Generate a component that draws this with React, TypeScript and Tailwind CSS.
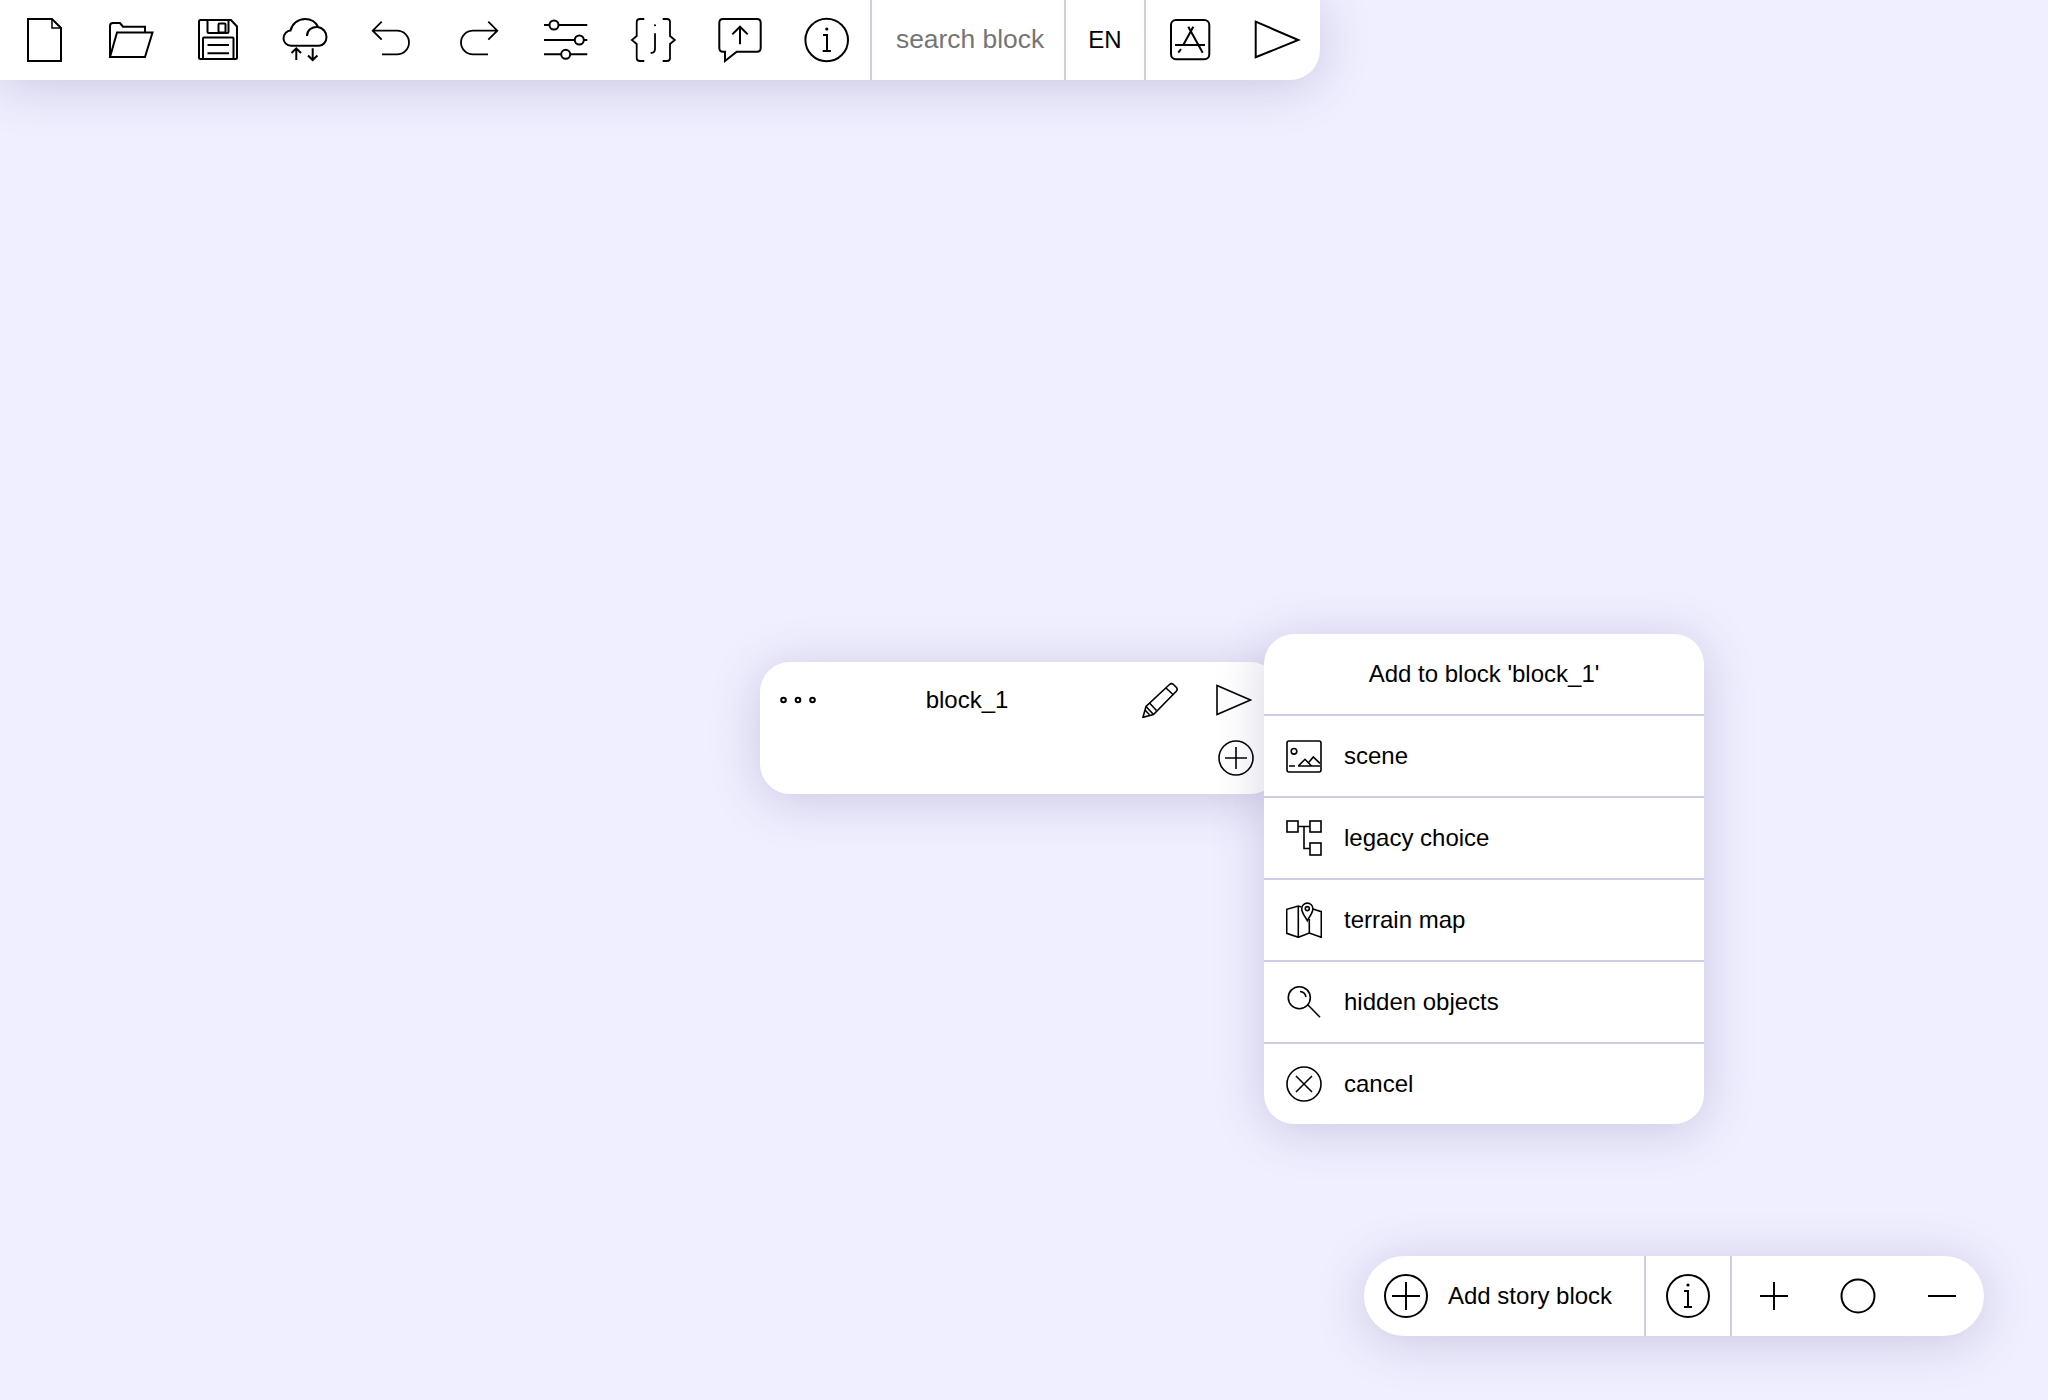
import React from 'react';

const panelShadow = 'shadow-[0_6px_50px_rgba(65,58,125,0.22)]';

const Icon: React.FC<{ size?: number; sw?: number; children: React.ReactNode }> = ({ size = 48, sw = 2, children }) => (
  <svg
    width={size}
    height={size}
    viewBox={`0 0 ${size} ${size}`}
    fill="none"
    stroke="#000"
    strokeWidth={sw}
    className="block shrink-0"
  >
    {children}
  </svg>
);

const toolbarIcons: React.ReactNode[] = [
  // new file
  <Icon key="file">
    <path d="M8 3H32L41 12V45H8Z" />
    <path d="M32 3V12H41" strokeWidth={1.5} />
  </Icon>,
  // open folder
  <Icon key="folder">
    <path d="M3 41V10Q3 7 6 7H13L16 10.7H38V16.5" />
    <path d="M3 41L10 16.5H45.5L38 41Z" />
  </Icon>,
  // save
  <Icon key="save">
    <path d="M6.5 4H37L43 10.5V41.5Q43 43 41.5 43H6.5Q5 43 5 41.5V5.5Q5 4 6.5 4Z" />
    <path d="M13.5 4V15.5Q13.5 17 15 17H33Q34.5 17 34.5 15.5V4" />
    <rect x="24.5" y="7.5" width="7" height="9" rx="1" />
    <path d="M9 43V22.5Q9 21.5 10 21.5H38.5Q39.5 21.5 39.5 22.5V43" />
    <path d="M13.5 29H35M13.5 37.3H35" />
  </Icon>,
  // cloud sync
  <Icon key="cloud">
    <path d="M10 29.7C5.5 29.7 2.5 26 2.5 22.5C2.5 18 6 14.5 9.5 14.5C11 8 17 3 24 3C31 3 35 6.5 37 11C42 12 45.5 16 45.5 21C45.5 26 42 29.7 38 29.7Z" />
    <path d="M26 20C26 14 31 10.5 37 11" />
    <path d="M15.3 44V32.5M10.5 37L15.3 32.3L20 37" />
    <path d="M31.7 32.3V44M27 39.5L31.7 44L36.4 39.5" />
  </Icon>,
  // undo
  <Icon key="undo" sw={1.8}>
    <path d="M13.7 5.7L4.7 14.7L13.7 23.7M4.7 14.7H29A12 11.8 0 0 1 29 38.3H14" />
  </Icon>,
  // redo
  <Icon key="redo" sw={1.8}>
    <path d="M33.3 5.7L42.3 14.7L33.3 23.7M42.3 14.7H18A12 11.8 0 0 0 18 38.3H33" />
  </Icon>,
  // settings sliders
  <Icon key="sliders">
    <path d="M2 9H45.3M2 24H45.3M2 38.3H45.3" />
    <circle cx="12" cy="9" r="4.5" fill="#fff" />
    <circle cx="37.3" cy="24" r="4.5" fill="#fff" />
    <circle cx="23.7" cy="38.3" r="4.5" fill="#fff" />
  </Icon>,
  // json braces
  <Icon key="json" sw={1.8}>
    <path d="M15.3 3H11Q7.7 3 7.7 6V20L2.9 24L7.7 28V42Q7.7 45 11 45H15.3" />
    <path d="M33.7 3H38Q41 3 41 6V20L45.8 24L41 28V42Q41 45 38 45H33.7" />
    <path d="M26 17.3V33Q26 37 21.7 37" />
    <circle cx="26" cy="9.2" r="1" fill="#000" stroke="none" />
  </Icon>,
  // publish comment
  <Icon key="comment">
    <path d="M7 3H41Q44.7 3 44.7 6.7V32Q44.7 35.7 41 35.7H20.7L9 45V35.7H7Q3.3 35.7 3.3 32V6.7Q3.3 3 7 3Z" />
    <path d="M24 28.3V10.7M16.3 18.4L24 10.7L31.7 18.4" />
  </Icon>,
  // info
  <Icon key="info">
    <circle cx="23.7" cy="24" r="21.3" />
    <path d="M20 19H24V35M19.7 35H27.9" />
    <circle cx="23.8" cy="13" r="1.6" fill="#000" stroke="none" />
  </Icon>,
];

const PlayIcon = () => (
  <Icon>
    <path d="M2.7 5.7L45.3 24L2.7 41.3Z" />
  </Icon>
);

const AppStoreIcon = () => (
  <Icon>
    <rect x="5" y="4" width="38.3" height="39.3" rx="5" />
    <path d="M22.3 10.7L36.7 36.7M27.3 10.7L17 29.5M15 33L12.3 36.7M9 29H39" />
  </Icon>
);

const PlusCircle: React.FC<{ size: number; r: number; arm: number; sw?: number }> = ({ size, r, arm, sw }) => {
  const c = size / 2;
  return (
    <Icon size={size} sw={sw}>
      <circle cx={c} cy={c} r={r} />
      <path d={`M${c - arm} ${c}H${c + arm}M${c} ${c - arm}V${c + arm}`} />
    </Icon>
  );
};

const menuItems: { label: string; icon: React.ReactNode }[] = [
  {
    label: 'scene',
    icon: (
      <Icon size={36} sw={1.6}>
        <rect x="1" y="3" width="34" height="31" rx="2" />
        <circle cx="8" cy="13.3" r="2.8" />
        <path d="M3 28H9M12 28H34" />
        <path d="M12.3 28L19 21.3L25.5 28M22.5 24.8L27.3 18.9L34 25.3" />
      </Icon>
    ),
  },
  {
    label: 'legacy choice',
    icon: (
      <Icon size={36} sw={1.6}>
        <rect x="1" y="1" width="11" height="11" />
        <rect x="24" y="1" width="11" height="11" />
        <rect x="24" y="23" width="11" height="12" />
        <path d="M12 6.5H24M18 6.5V28.5H24" />
      </Icon>
    ),
  },
  {
    label: 'terrain map',
    icon: (
      <Icon size={36} sw={1.6}>
        <path d="M12.3 35.3L0.7 31.3V7.3L12.3 4L15.5 5" />
        <path d="M12.3 4V35.3L23.3 31L35.3 35.3V9.7L27 7" />
        <path d="M23.3 17V31" />
        <path d="M21.3 18.7C19.5 15 15.7 11 15.7 6.7A5.6 5.6 0 0 1 26.9 6.7C26.9 11 23.1 15 21.3 18.7Z" fill="#fff" />
        <circle cx="21.3" cy="6.6" r="2" />
      </Icon>
    ),
  },
  {
    label: 'hidden objects',
    icon: (
      <Icon size={36} sw={1.6}>
        <circle cx="13.3" cy="13.7" r="11" />
        <path d="M14 7.5C17 7.8 19.5 10 20 13" />
        <path d="M21.5 20.5L34 33.3" />
      </Icon>
    ),
  },
  {
    label: 'cancel',
    icon: (
      <Icon size={36} sw={1.6}>
        <circle cx="18" cy="18" r="17" />
        <path d="M10 10L26 26M26 10L10 26" />
      </Icon>
    ),
  },
];

export default function App() {
  return (
    <div
      className="relative w-full h-[1400px] overflow-hidden bg-[#f0efff] text-black text-[24px]"
      style={{ fontFamily: '"Liberation Sans", Arial, sans-serif' }}
    >
      {/* Top toolbar */}
      <div className={`absolute top-0 left-0 flex h-20 w-[1320px] bg-white rounded-br-[30px] ${panelShadow}`}>
        {toolbarIcons.map((icon, i) => (
          <div key={i} className="w-[87px] flex items-center justify-center">
            {icon}
          </div>
        ))}
        <div className="w-[194px] border-l-2 border-[#cfcde6] flex items-center pl-[24px]">
          <input
            placeholder="search block"
            className="w-full bg-transparent outline-none text-[26.4px] placeholder:text-[#757575]"
          />
        </div>
        <div className="w-[82px] border-x-2 border-[#cfcde6] flex items-center justify-center">EN</div>
        <div className="w-[87px] flex items-center justify-center">
          <AppStoreIcon />
        </div>
        <div className="w-[87px] flex items-center justify-center">
          <PlayIcon />
        </div>
      </div>

      {/* Story block node */}
      <div className={`absolute left-[760px] top-[662px] w-[520px] h-[132px] bg-white rounded-[30px] ${panelShadow}`}>
        <div className="flex items-center h-[76px] pl-5 pr-[28px]">
          <Icon size={36}>
            <circle cx="3.5" cy="18" r="2.3" />
            <circle cx="18" cy="18" r="2.3" />
            <circle cx="32.5" cy="18" r="2.3" />
          </Icon>
          <div className="flex-1 text-center">block_1</div>
          <div className="ml-6">
            <Icon size={36} sw={1.6}>
              <path d="M1 35.3L4 24.5L27.5 2.5Q29.5 0.8 31.5 2.5L34.5 5.5Q36 7.5 34.3 9.3L11.5 32.5Z" />
              <path d="M4 24.5L11.5 32.5M7.5 21L14.5 28.5M24 6L31.5 13M3 28L7.5 32.8" />
            </Icon>
          </div>
          <div className="ml-[38px]">
            <Icon size={36} sw={1.6}>
              <path d="M1 3.5L34.5 18L1 32.5Z" />
            </Icon>
          </div>
        </div>
        <div className="flex justify-end pr-[26px] pt-[2px]">
          <PlusCircle size={36} r={17} arm={11} sw={1.6} />
        </div>
      </div>

      {/* Add menu */}
      <div className={`absolute left-[1264px] top-[634px] w-[440px] bg-white rounded-[30px] ${panelShadow}`}>
        <div className="h-20 flex items-center justify-center">Add to block 'block_1'</div>
        {menuItems.map((item) => (
          <div key={item.label} className="h-[82px] border-t-2 border-[#cfcde6] flex items-center pl-[22px] gap-[22px]">
            {item.icon}
            <span>{item.label}</span>
          </div>
        ))}
      </div>

      {/* Bottom bar */}
      <div className={`absolute right-[64px] bottom-[64px] flex h-20 bg-white rounded-[40px] ${panelShadow}`}>
        <div className="w-[280px] flex items-center pl-[18px] gap-[18px]">
          <PlusCircle size={48} r={21} arm={14} />
          <span>Add story block</span>
        </div>
        <div className="w-[88px] border-x-2 border-[#cfcde6] flex items-center justify-center">
          <Icon>
            <circle cx="24" cy="24" r="21" />
            <path d="M20 19H24V35M20 35H28" />
            <circle cx="24" cy="13" r="1.6" fill="#000" stroke="none" />
          </Icon>
        </div>
        <div className="w-[84px] flex items-center justify-center">
          <Icon size={36}>
            <path d="M4 18H32M18 4V32" />
          </Icon>
        </div>
        <div className="w-[84px] flex items-center justify-center">
          <Icon size={36}>
            <circle cx="18" cy="18" r="16.5" />
          </Icon>
        </div>
        <div className="w-[84px] flex items-center justify-center">
          <Icon size={36}>
            <path d="M4 18H32" />
          </Icon>
        </div>
      </div>
    </div>
  );
}
